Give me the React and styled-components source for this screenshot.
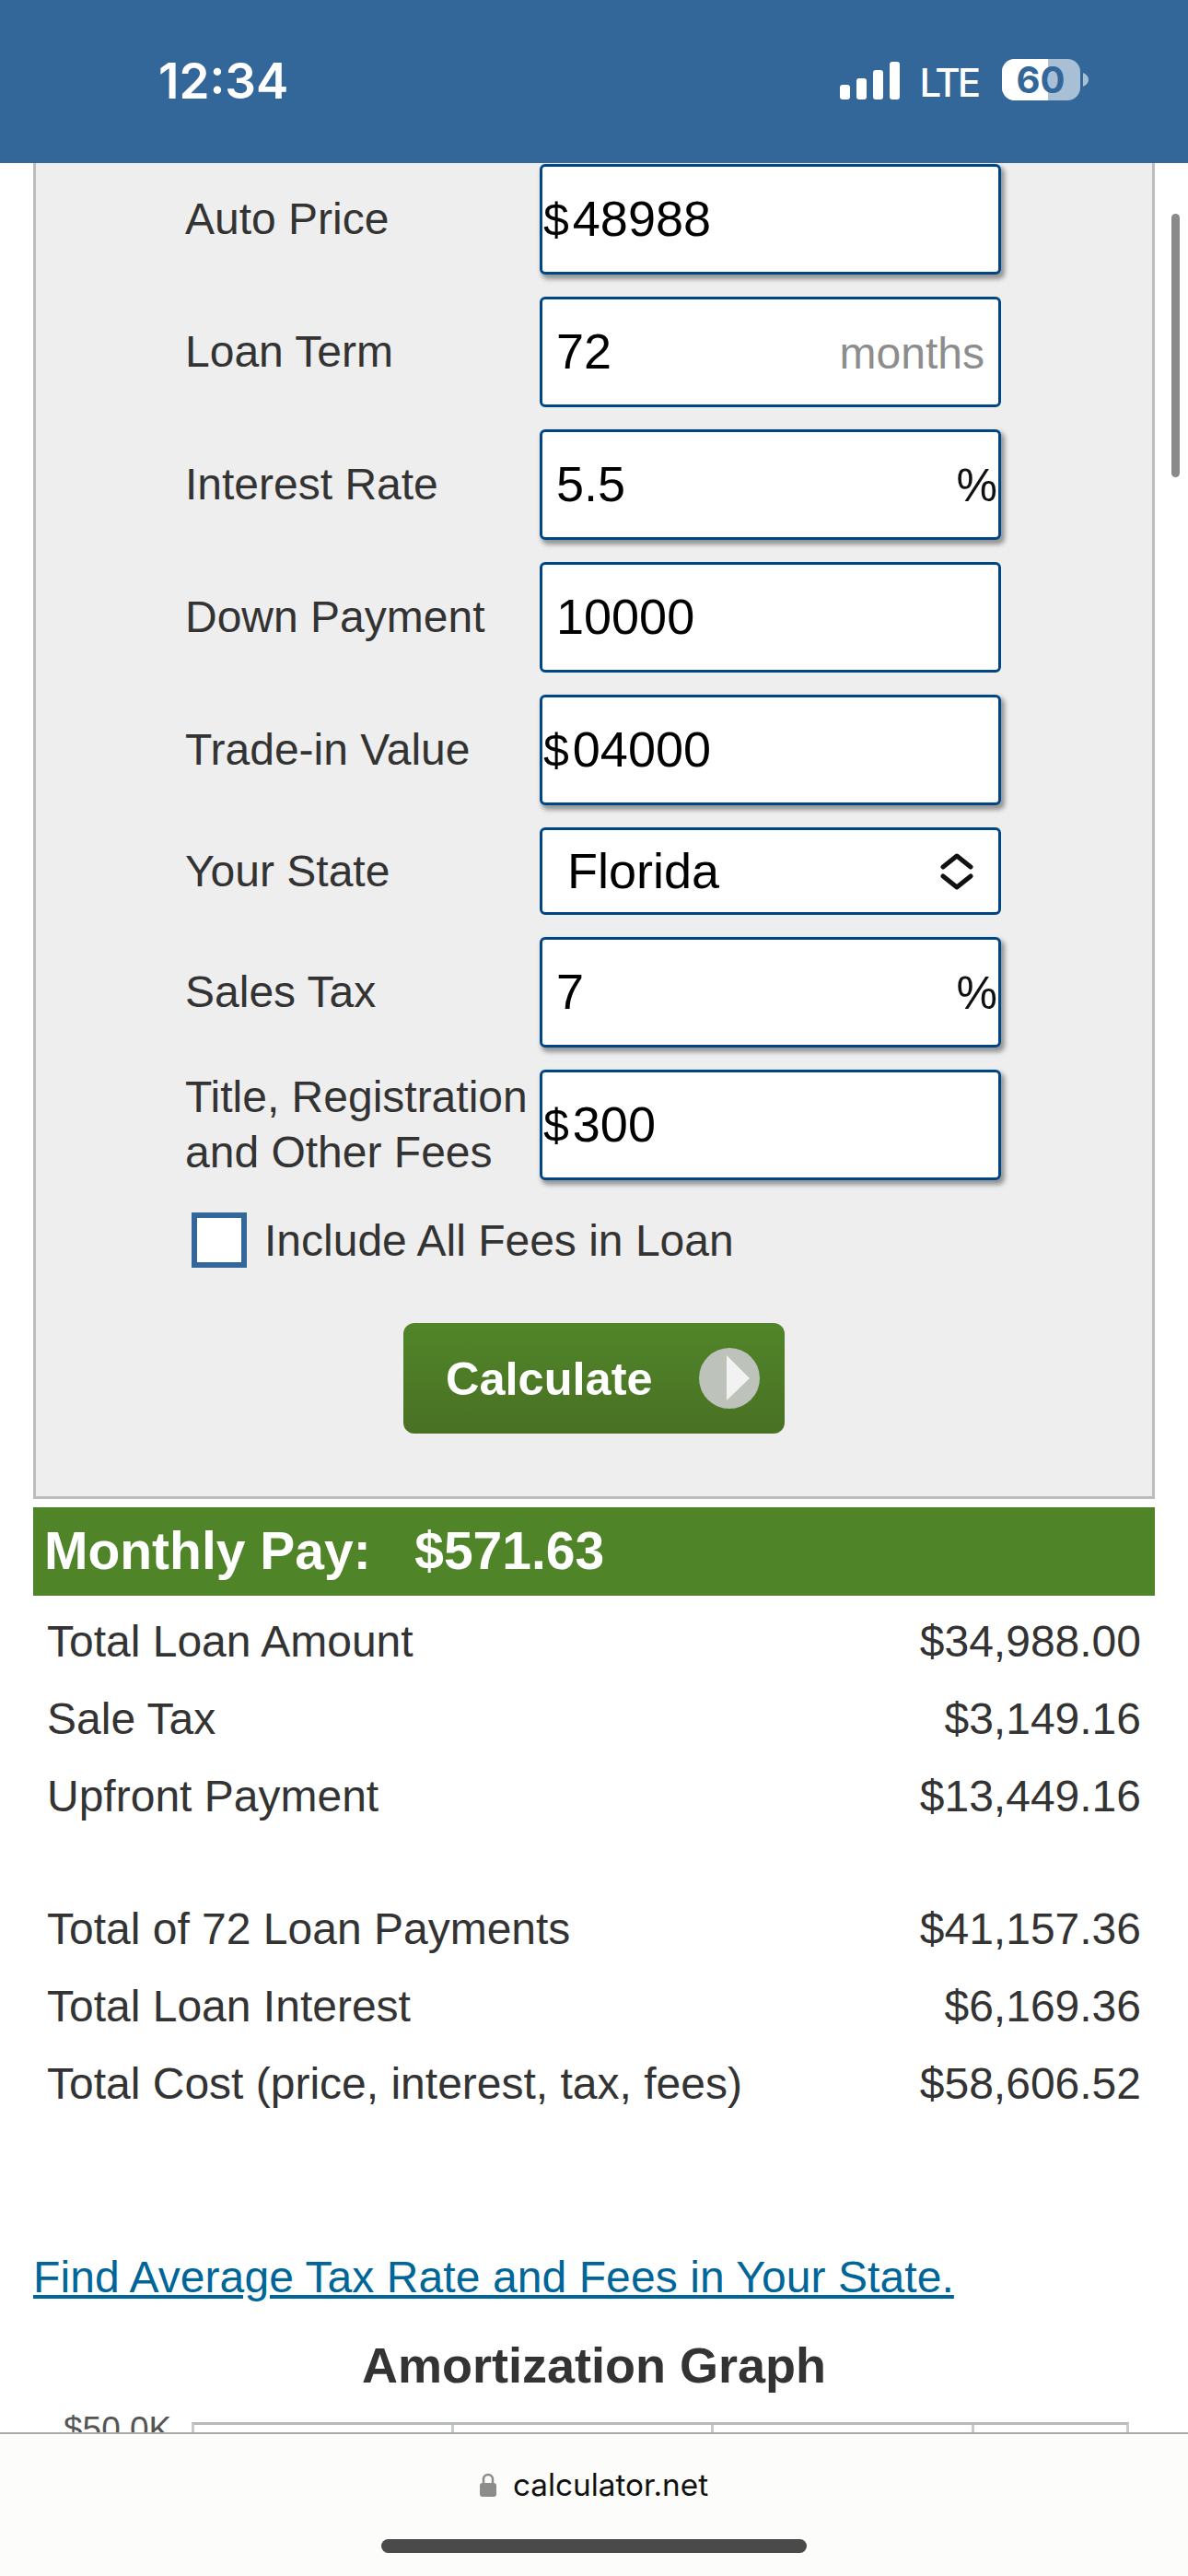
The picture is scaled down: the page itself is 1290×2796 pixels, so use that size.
import React from "react";
import styled, { createGlobalStyle } from "styled-components";

const Global = createGlobalStyle`
  html, body { margin: 0; padding: 0; background: #fff; }
  * { box-sizing: border-box; }
`;

const Screen = styled.div`
  position: relative;
  width: 1290px;
  height: 2796px;
  display: flex;
  flex-direction: column;
  overflow: hidden;
  font-family: "Liberation Sans", Arial, sans-serif;
  background: #fff;
`;

const StatusBar = styled.header`
  flex: 0 0 177px;
  background: #336699;
  color: #fff;
  display: flex;
  align-items: flex-start;
  justify-content: space-between;
  padding: 60px 106px 0 172px;
`;

const Clock = styled.div`
  font-family: Inter, "Liberation Sans", sans-serif;
  font-size: 53px;
  font-weight: 600;
  line-height: 56px;
`;

const StatusRight = styled.div`
  display: flex;
  align-items: center;
  height: 48px;
  margin-top: 3px;
`;

const Lte = styled.span`
  font-family: Inter, "Liberation Sans", sans-serif;
  font-size: 42px;
  font-weight: 500;
  letter-spacing: -3px;
  margin: 6px 26px 0 21px;
  line-height: 48px;
`;

const Page = styled.main`
  flex: 1;
  min-height: 0;
  overflow: hidden;
  padding: 0 36px;
  color: #333;
`;

const Panel = styled.section`
  background: #eee;
  border: 3px solid #bbbfbb;
  border-top: 0;
  height: 1450px;
  padding: 1px 0 0 162px;
`;

const Row = styled.div`
  display: grid;
  grid-template-columns: 385px 501px;
  align-items: center;
  height: ${(p) => p.$h || 120}px;
  margin-bottom: 24px;
`;

const Label = styled.div`
  font-size: 48px;
  line-height: 60px;
  white-space: nowrap;
  color: #333;
`;

const Field = styled.div`
  height: 100%;
  background: #fff;
  border: 3px solid #004687;
  border-radius: 6px;
  display: flex;
  align-items: center;
  justify-content: space-between;
  color: #000;
  font-size: 54px;
  padding-left: ${(p) => p.$pad ?? 15}px;
  box-shadow: ${(p) => (p.$raised ? "3px 4px 5px 1px rgba(0,0,0,.38)" : "none")};
`;

const Value = styled.span`
  position: relative;
  top: -1px;
`;

const Dollar = styled.span`
  font-size: 50px;
  margin-right: 4px;
`;

const Unit = styled.span`
  position: relative;
  top: 1px;
  color: ${(p) => (p.$muted ? "#8d8d8d" : "#111")};
  font-size: ${(p) => (p.$muted ? 48 : 50)}px;
  padding-right: ${(p) => (p.$muted ? 15 : 1)}px;
`;

const Chevrons = styled.svg`
  width: 36px;
  height: 40px;
  margin-right: 27px;
`;

const CheckRow = styled.label`
  display: flex;
  align-items: center;
  gap: 19px;
  margin: 34px 0 0 7px;
  font-size: 48px;
  height: 62px;
`;

const CheckBox = styled.span`
  width: 60px;
  height: 60px;
  background: #fff;
  border: 6px solid #336699;
`;

const ButtonRow = styled.div`
  display: flex;
  padding-left: 237px;
  margin-top: 59px;
`;

const CalcButton = styled.button`
  width: 414px;
  height: 120px;
  border: 0;
  border-radius: 12px;
  background: linear-gradient(#518529, #497124);
  color: #fff;
  font-family: inherit;
  font-size: 50.500px;
  font-weight: 700;
  display: flex;
  align-items: center;
  padding: 0 27px 0 46px;
  justify-content: space-between;
`;

const PlayIcon = styled.svg`
  width: 66px;
  height: 66px;
`;

const SummaryBar = styled.div`
  margin-top: 9px;
  height: 96px;
  background: #4f8428;
  color: #fff;
  font-size: 57px;
  font-weight: 700;
  padding: 0 12px 2px;
  display: flex;
  align-items: center;
  white-space: pre;
`;

const ResultTable = styled.div`
  padding: 0 15px;
  margin-top: ${(p) => p.$mt || 0}px;
`;

const ResultRow = styled.div`
  height: 84px;
  display: flex;
  align-items: center;
  justify-content: space-between;
  font-size: 48px;
  color: #333;
`;

const StateLink = styled.a`
  display: block;
  margin-top: 141px;
  font-size: 48px;
  line-height: 56px;
  letter-spacing: 0.08px;
  color: #006699;
  text-decoration: underline;
`;

const GraphTitle = styled.h2`
  margin: 36px 0 0;
  text-align: center;
  font-size: 54px;
  line-height: 62px;
  font-weight: 700;
  color: #333;
`;

const Graph = styled.div`
  display: flex;
  align-items: flex-start;
  margin-top: 31px;
`;

const AxisLabel = styled.div`
  width: 172px;
  padding-left: 33px;
  margin-top: -10px;
  font-size: 37px;
  line-height: 36px;
  color: #555;
`;

const PlotTop = styled.div`
  display: flex;
  width: 1018px;
  height: 60px;
  border-top: 3px solid #b8bcb8;
  border-left: 3px solid #c8cbc8;
  border-right: 3px solid #c8cbc8;
`;

const GridCell = styled.div`
  flex: 0 0 ${(p) => p.$w}px;
  border-right: ${(p) => (p.$last ? "0" : "3px solid #c8cbc8")};
`;

const BottomBar = styled.footer`
  flex: 0 0 156px;
  position: relative;
  z-index: 1;
  background: #fcfcfa;
  border-top: 2px solid #aaa;
  display: flex;
  flex-direction: column;
  align-items: center;
`;

const Address = styled.div`
  display: flex;
  align-items: center;
  gap: 18px;
  margin-top: 33px;
  font-family: Inter, "Liberation Sans", sans-serif;
  font-size: 33.300px;
  line-height: 44px;
  color: #111;
`;

const HomeBar = styled.div`
  width: 462px;
  height: 15px;
  margin-top: 37px;
  border-radius: 8px;
  background: #4a4a4a;
`;

const ScrollThumb = styled.div`
  position: absolute;
  left: 1272px;
  top: 232px;
  width: 9px;
  height: 286px;
  border-radius: 5px;
  background: #8a8a8a;
`;

const fields = [
  { label: "Auto Price", value: "48988", dollar: true, raised: true },
  { label: "Loan Term", value: "72", unit: "months", muted: true },
  { label: "Interest Rate", value: "5.5", unit: "%", raised: true },
  { label: "Down Payment", value: "10000" },
  { label: "Trade-in Value", value: "04000", dollar: true, raised: true },
];

const summaryA = [
  ["Total Loan Amount", "$34,988.00"],
  ["Sale Tax", "$3,149.16"],
  ["Upfront Payment", "$13,449.16"],
];
const summaryB = [
  ["Total of 72 Loan Payments", "$41,157.36"],
  ["Total Loan Interest", "$6,169.36"],
  ["Total Cost (price, interest, tax, fees)", "$58,606.52"],
];

function FieldRow({ f }) {
  return (
    <Row>
      <Label>{f.label}</Label>
      <Field $raised={f.raised} $pad={f.dollar ? 1 : 15}>
        <Value>
          {f.dollar && <Dollar>$</Dollar>}
          {f.value}
        </Value>
        {f.unit && <Unit $muted={f.muted}>{f.unit}</Unit>}
      </Field>
    </Row>
  );
}

export default function App() {
  return (
    <Screen>
      <Global />
      <StatusBar>
        <Clock>12:34</Clock>
        <StatusRight>
          <svg width="65" height="41" viewBox="0 0 65 41">
            <rect x="0" y="25" width="11" height="16" rx="3" fill="#fff" />
            <rect x="18" y="18" width="11" height="23" rx="3" fill="#fff" />
            <rect x="36" y="9" width="11" height="32" rx="3" fill="#fff" />
            <rect x="54" y="0" width="11" height="41" rx="3" fill="#fff" />
          </svg>
          <Lte>LTE</Lte>
          <svg width="96" height="46" viewBox="0 0 96 46">
            <rect x="0" y="0" width="85" height="45" rx="14" fill="#a9bfd6" />
            <path d="M14 0H50V45H14A14 14 0 0 1 0 31V14A14 14 0 0 1 14 0Z" fill="#fff" />
            <path d="M88 15C92 17 94 19 94 22.500C94 26 92 28 88 30Z" fill="#a9bfd6" />
            <text x="42" y="37" textAnchor="middle" fontFamily="Inter, Liberation Sans, sans-serif" fontSize="40" fontWeight="700" fill="#336699">60</text>
          </svg>
        </StatusRight>
      </StatusBar>

      <Page>
        <Panel>
          {fields.map((f) => (
            <FieldRow key={f.label} f={f} />
          ))}
          <Row $h={95}>
            <Label>Your State</Label>
            <Field $pad={27}>
              <Value>Florida</Value>
              <Chevrons viewBox="0 0 36 40" fill="none" stroke="#111" strokeWidth="5" strokeLinecap="round" strokeLinejoin="round">
                <path d="M3 15 18 3 33 15" />
                <path d="M3 25 18 37 33 25" />
              </Chevrons>
            </Field>
          </Row>
          <Row>
            <Label>Sales Tax</Label>
            <Field $raised>
              <Value>7</Value>
              <Unit>%</Unit>
            </Field>
          </Row>
          <Row>
            <Label>
              Title, Registration
              <br />
              and Other Fees
            </Label>
            <Field $raised $pad={1}>
              <Value>
                <Dollar>$</Dollar>300
              </Value>
            </Field>
          </Row>
          <CheckRow>
            <CheckBox />
            Include All Fees in Loan
          </CheckRow>
          <ButtonRow>
            <CalcButton>
              Calculate
              <PlayIcon viewBox="0 0 66 66">
                <circle cx="33" cy="33" r="33" fill="#bdc2bb" />
                <path d="M30 8 55 33 30 57Z" fill="#f2f2f2" />
              </PlayIcon>
            </CalcButton>
          </ButtonRow>
        </Panel>

        <SummaryBar>{"Monthly Pay:   $571.63"}</SummaryBar>
        <ResultTable $mt={7}>
          {summaryA.map(([k, v]) => (
            <ResultRow key={k}>
              <span>{k}</span>
              <span>{v}</span>
            </ResultRow>
          ))}
        </ResultTable>
        <ResultTable $mt={60}>
          {summaryB.map(([k, v]) => (
            <ResultRow key={k}>
              <span>{k}</span>
              <span>{v}</span>
            </ResultRow>
          ))}
        </ResultTable>

        <StateLink>Find Average Tax Rate and Fees in Your State.</StateLink>
        <GraphTitle>Amortization Graph</GraphTitle>
        <Graph>
          <AxisLabel>$50.0K</AxisLabel>
          <PlotTop>
            <GridCell $w={282} />
            <GridCell $w={282} />
            <GridCell $w={283} />
            <GridCell $w={168} $last />
          </PlotTop>
        </Graph>
      </Page>

      <BottomBar>
        <Address>
          <svg width="18" height="26" viewBox="0 0 18 26">
            <path d="M4 12V7a5 5 0 0 1 10 0v5" fill="none" stroke="#8c8c8c" strokeWidth="2.500" />
            <rect x="0" y="11" width="18" height="15" rx="3" fill="#8c8c8c" />
          </svg>
          calculator.net
        </Address>
        <HomeBar />
      </BottomBar>
      <ScrollThumb />
    </Screen>
  );
}
